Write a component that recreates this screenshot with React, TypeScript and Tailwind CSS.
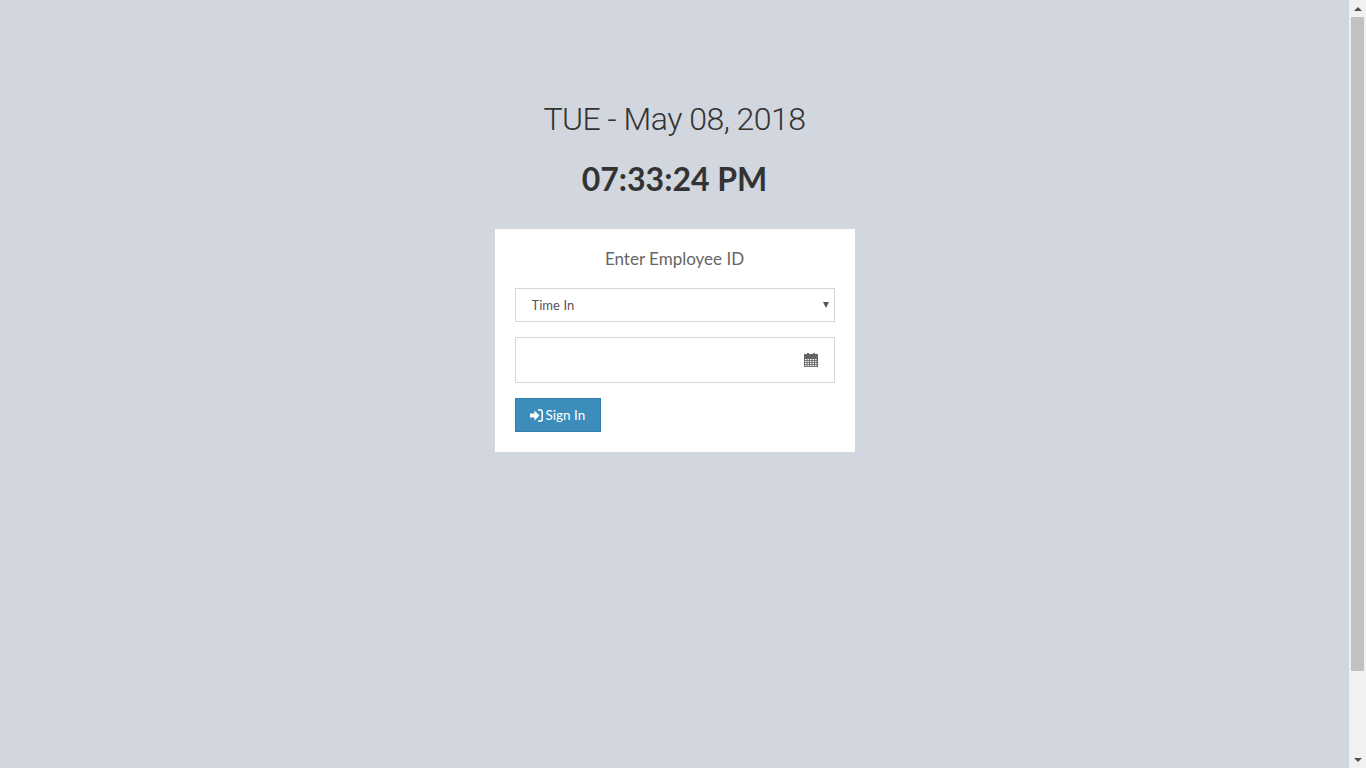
const Scrollbar = () => {
    return (
        <div className="flex flex-col w-[17px] h-[768px] bg-[#f1f1f1] shrink-0">
            <div className="flex justify-center items-center h-[17px]">
                <div className="w-0 h-0 border-x-[4px] border-x-transparent border-b-[4px] border-b-[#505050]" />
            </div>
            <div className="h-[654px] mx-[2px] bg-[#c1c1c1]" />
            <div className="flex-1" />
            <div className="flex justify-center items-center h-[17px]">
                <div className="w-0 h-0 border-x-[4px] border-x-transparent border-t-[4px] border-t-[#505050]" />
            </div>
        </div>
    )
}

const CalendarIcon = () => {
    const cols = [1, 3.5, 6, 8.5, 11]
    const rows = [6, 8, 10, 12]
    return (
        <svg width="14" height="14" viewBox="0 0 14 14">
            <rect x="0" y="1" width="14" height="13" fill="#666" />
            <rect x="3" y="0" width="2" height="2" fill="#666" />
            <rect x="9" y="0" width="2" height="2" fill="#666" />
            {rows.map((y) =>
                cols.map((x) => <rect key={`${x}-${y}`} x={x} y={y} width="1.6" height="1.2" fill="#eef0f3" />)
            )}
        </svg>
    )
}

const SignInIcon = () => {
    return (
        <svg width="13" height="13" viewBox="0 0 13 13">
            <path d="M0 4.5H4.5V1.5L9.5 6.5L4.5 11.5V8.5H0Z" fill="#fff" />
            <path d="M8 1H10.5Q12.2 1 12.2 2.8V10.2Q12.2 12 10.5 12H8" fill="none" stroke="#fff" strokeWidth="1.5" />
        </svg>
    )
}

export default function App() {
    return (
        <div className="flex h-[768px] overflow-hidden bg-[#d2d6de] font-['Lato','Noto_Sans',sans-serif]">
            <div className="flex flex-col items-center flex-1 pt-[99px]">
                <div className="h-[40px] text-[32px] leading-[40px] tracking-[-0.5px] font-['Roboto',sans-serif] font-light text-[#333]">TUE - May 08, 2018</div>
                <div className="mt-[20px] h-[40px] text-[32px] leading-[40px] font-bold text-[#333]">07:33:24 PM</div>
                <div className="flex flex-col mt-[30px] w-[360px] h-[223px] p-5 bg-white">
                    <p className="h-[20px] mb-[19px] text-center text-[17px] leading-[20px] text-[#666]">Enter Employee ID</p>
                    <div className="relative">
                        <select className="block w-full h-[34px] pl-[16px] pt-[1px] appearance-none border border-[#d2d6de] bg-white text-[13px] tracking-[0.05px] text-[#555] outline-none">
                            <option>Time In</option>
                        </select>
                        <div className="absolute right-[6px] top-[14px] w-0 h-0 border-x-[3.5px] border-x-transparent border-t-[6px] border-t-[#555]" />
                    </div>
                    <div className="flex justify-end items-center mt-[15px] h-[46px] pr-[16px] border border-[#d2d6de]">
                        <CalendarIcon />
                    </div>
                    <button className="flex items-center gap-[3px] mt-[15px] w-[86px] h-[34px] pl-[14px] bg-[#3c8dbc] border border-[#367fa9] text-white text-[13.5px]">
                        <SignInIcon />
                        Sign In
                    </button>
                </div>
            </div>
            <Scrollbar />
        </div>
    )
}
